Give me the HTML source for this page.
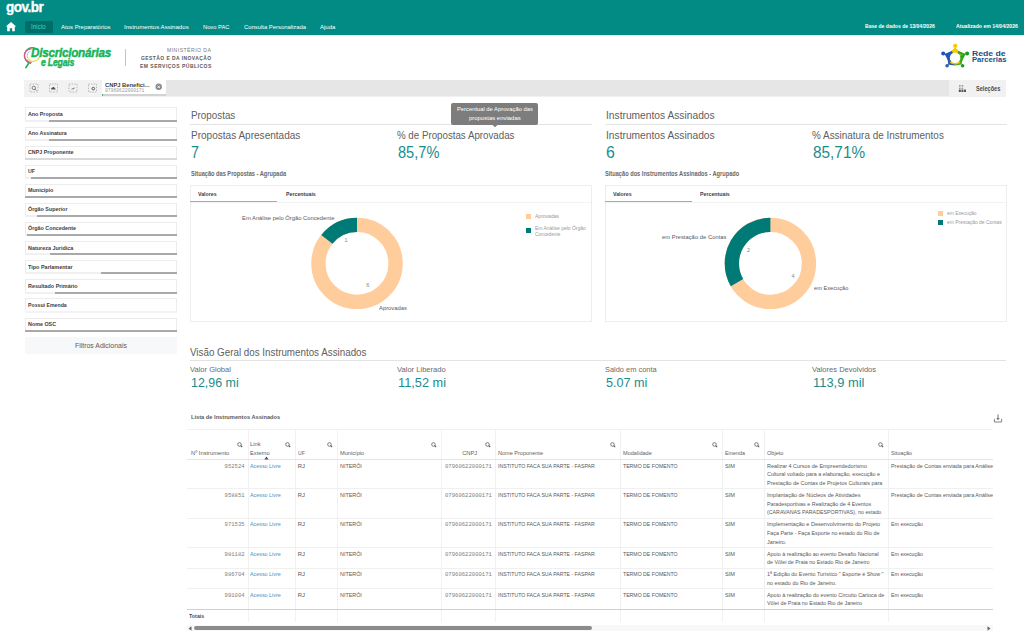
<!DOCTYPE html>
<html><head><meta charset="utf-8"><style>
html,body{margin:0;padding:0;width:1024px;height:644px;overflow:hidden;background:#fff;position:relative;font-family:'Liberation Sans', sans-serif;}
.t{position:absolute;white-space:nowrap;}
</style></head><body>
<div style="position:absolute;left:0px;top:0px;width:1024px;height:35px;background:#028b84;"></div>
<div style="position:absolute;left:0px;top:35px;width:1024px;height:1px;background:#e2f0ef;"></div>
<svg style="position:absolute;left:5px;top:21px" width="12" height="11" viewBox="0 0 12 11"><path d="M6 1 L11.2 5.6 L9.8 5.6 L9.8 10.2 L7.2 10.2 L7.2 7.2 L4.8 7.2 L4.8 10.2 L2.2 10.2 L2.2 5.6 L0.8 5.6 Z" fill="#fff"/></svg>
<div style="position:absolute;left:24.9px;top:20.7px;width:27.9px;height:12.099999999999998px;background:#006e66;border-radius:1.5px;"></div>
<svg style="position:absolute;left:20px;top:44px" width="24" height="26" viewBox="0 0 24 26"><path d="M15.00 4.18 A7.9 7.9 0 1 0 10.93 19.38" fill="none" stroke="#16b35a" stroke-width="1.3"/><path d="M11.72 4.93 A6.7 6.7 0 1 0 11.72 18.27" fill="none" stroke="#e2508f" stroke-width="1.2"/><path d="M10.10 6.89 A5.2 5.2 0 0 0 7.80 14.20" fill="none" stroke="#6cc9a8" stroke-width="0.8"/><path d="M7.56 14.76 A7.1 7.1 0 0 0 19.94 11.68" fill="none" stroke="#e6e04a" stroke-width="1.3"/><path d="M8.6 19.4 L5.9 23.6" stroke="#16b35a" stroke-width="1.7" stroke-linecap="round"/></svg>
<div style="position:absolute;left:124.5px;top:48.8px;width:1.0px;height:17.60000000000001px;background:#c4c4c4;"></div>
<svg style="position:absolute;left:938px;top:42px" width="34" height="28" viewBox="0 0 34 28"><path d="M17.19 5.40 L22.43 10.38 L17.10 15.80 L11.87 10.29 Z" fill="#f5c800"/><path d="M27.69 12.01 L24.03 18.93 L17.10 15.80 L20.47 8.99 Z" fill="#22a51c"/><path d="M23.57 22.61 L17.04 23.40 L17.10 15.80 L24.69 16.13 Z" fill="#3aa81e"/><path d="M10.17 22.65 L9.50 15.88 L17.10 15.80 L16.92 23.40 Z" fill="#2d5fae"/><path d="M6.61 11.92 L13.80 8.95 L17.10 15.80 L10.14 18.86 Z" fill="#1f55b8"/><path d="M11.60 20.80 Q17.10 24.30 22.60 20.80 L17.10 15.80 Z" fill="#e8c410"/><path d="M21.30 11.20 L19.10 15.80 L25.10 12.80 Z" fill="#7ab820"/><circle cx="17.1" cy="15.8" r="5.3" fill="#fff"/><circle cx="17.2" cy="3.9" r="2.1" fill="#f5c800"/><circle cx="29.1" cy="11.5" r="2.0" fill="#169c1c"/><circle cx="24.6" cy="23.7" r="1.8" fill="#14a01e"/><circle cx="9.1" cy="23.7" r="1.8" fill="#2a62b0"/><circle cx="5.2" cy="11.4" r="2.0" fill="#1a4fc6"/></svg>
<div style="position:absolute;left:24.3px;top:95.6px;width:981.9000000000001px;height:0.8000000000000114px;background:#f1f1f1;"></div>
<div style="position:absolute;left:24.3px;top:79.9px;width:77.3px;height:15.799999999999997px;background:#f2f2f2;"></div>
<div style="position:absolute;left:165.9px;top:79.9px;width:782.9px;height:15.799999999999997px;background:#e6e6e6;"></div>
<div style="position:absolute;left:948.8px;top:79.9px;width:57.40000000000009px;height:15.799999999999997px;background:#f1f1f1;"></div>
<div style="position:absolute;left:101.6px;top:79.5px;width:64.30000000000001px;height:14.299999999999997px;background:#fff;"></div>
<div style="position:absolute;left:101.6px;top:93.8px;width:64.30000000000001px;height:1.9000000000000057px;background:#d2d2d2;"></div>
<div style="position:absolute;left:101.6px;top:93.8px;width:1.4000000000000057px;height:1.9000000000000057px;background:#52b36a;"></div>
<svg style="position:absolute;left:28px;top:82px" width="72" height="12" viewBox="0 0 72 12"><rect x="2" y="2" width="8" height="8" fill="none" stroke="#a8a8a8" stroke-width="0.8" stroke-dasharray="1.4 1.3"/><rect x="21.5" y="2" width="8" height="8" fill="none" stroke="#a8a8a8" stroke-width="0.8" stroke-dasharray="1.4 1.3"/><rect x="41" y="2" width="8" height="8" fill="none" stroke="#a8a8a8" stroke-width="0.8" stroke-dasharray="1.4 1.3"/><rect x="60.5" y="2" width="8" height="8" fill="none" stroke="#a8a8a8" stroke-width="0.8" stroke-dasharray="1.4 1.3"/><circle cx="5.8" cy="5.9" r="1.7" fill="none" stroke="#666" stroke-width="0.8"/><path d="M7 7.1 L8.4 8.5" stroke="#666" stroke-width="0.9"/><path d="M23.2 6.2 L25.6 4.8 L27.4 6.6 L27.4 7.4 L23.2 7.4 Z" fill="#555"/><path d="M42.6 7.6 L45 6 L47.2 5.6 L45.8 7.2 Z" fill="#888"/><circle cx="65.3" cy="6.6" r="1.3" fill="none" stroke="#555" stroke-width="1"/></svg>
<svg style="position:absolute;left:155px;top:83px" width="8" height="8" viewBox="0 0 8 8"><circle cx="3.7" cy="3.8" r="3.2" fill="#8a8a8a"/><path d="M2.5 2.6 L4.9 5 M4.9 2.6 L2.5 5" stroke="#fff" stroke-width="0.9"/></svg>
<svg style="position:absolute;left:958px;top:84px" width="9" height="9" viewBox="0 0 9 9"><rect x="1" y="1" width="1.6" height="1.6" fill="#999"/><rect x="3.6" y="1" width="1.6" height="1.6" fill="#999"/><rect x="1" y="3.6" width="1.6" height="1.6" fill="#999"/><rect x="3.6" y="3.6" width="1.6" height="1.6" fill="#999"/><rect x="0.8" y="5.6" width="2" height="2.4" fill="#555"/><rect x="3.4" y="5.6" width="2" height="2.4" fill="#555"/><rect x="6" y="5.6" width="2" height="2.4" fill="#555"/></svg>
<div style="position:absolute;left:24.5px;top:107.40px;width:150.2px;height:12.2px;border:1px solid #ececec;border-bottom:none;background:#fff;"></div>
<div style="position:absolute;left:24.5px;top:119.60000000000001px;width:24.5px;height:2.0px;background:#f0f0f0;"></div>
<div style="position:absolute;left:49px;top:119.60000000000001px;width:127.69999999999999px;height:2.0px;background:#a9a9a9;"></div>
<div style="position:absolute;left:24.5px;top:126.50px;width:150.2px;height:12.2px;border:1px solid #ececec;border-bottom:none;background:#fff;"></div>
<div style="position:absolute;left:24.5px;top:138.7px;width:24.5px;height:2.0px;background:#f0f0f0;"></div>
<div style="position:absolute;left:49px;top:138.7px;width:127.69999999999999px;height:2.0px;background:#a9a9a9;"></div>
<div style="position:absolute;left:24.5px;top:145.60px;width:150.2px;height:12.2px;border:1px solid #ececec;border-bottom:none;background:#fff;"></div>
<div style="position:absolute;left:24.5px;top:157.8px;width:152.2px;height:2.0px;background:#d9d9d9;"></div>
<div style="position:absolute;left:24.5px;top:164.70px;width:150.2px;height:12.2px;border:1px solid #ececec;border-bottom:none;background:#fff;"></div>
<div style="position:absolute;left:24.5px;top:176.9px;width:6.100000000000001px;height:2.0px;background:#f0f0f0;"></div>
<div style="position:absolute;left:30.6px;top:176.9px;width:146.1px;height:2.0px;background:#a9a9a9;"></div>
<div style="position:absolute;left:24.5px;top:183.80px;width:150.2px;height:12.2px;border:1px solid #ececec;border-bottom:none;background:#fff;"></div>
<div style="position:absolute;left:24.5px;top:196.0px;width:0.10000000000000142px;height:2.0px;background:#f0f0f0;"></div>
<div style="position:absolute;left:24.6px;top:196.0px;width:152.1px;height:2.0px;background:#a9a9a9;"></div>
<div style="position:absolute;left:24.5px;top:202.90px;width:150.2px;height:12.2px;border:1px solid #ececec;border-bottom:none;background:#fff;"></div>
<div style="position:absolute;left:24.5px;top:215.1px;width:12.399999999999999px;height:2.0px;background:#f0f0f0;"></div>
<div style="position:absolute;left:36.9px;top:215.1px;width:139.79999999999998px;height:2.0px;background:#a9a9a9;"></div>
<div style="position:absolute;left:24.5px;top:222.00px;width:150.2px;height:12.2px;border:1px solid #ececec;border-bottom:none;background:#fff;"></div>
<div style="position:absolute;left:24.5px;top:234.2px;width:2.5px;height:2.0px;background:#f0f0f0;"></div>
<div style="position:absolute;left:27px;top:234.2px;width:149.7px;height:2.0px;background:#a9a9a9;"></div>
<div style="position:absolute;left:24.5px;top:241.10px;width:150.2px;height:12.2px;border:1px solid #ececec;border-bottom:none;background:#fff;"></div>
<div style="position:absolute;left:24.5px;top:253.3px;width:25.700000000000003px;height:2.0px;background:#f0f0f0;"></div>
<div style="position:absolute;left:50.2px;top:253.3px;width:126.49999999999999px;height:2.0px;background:#a9a9a9;"></div>
<div style="position:absolute;left:24.5px;top:260.20px;width:150.2px;height:12.2px;border:1px solid #ececec;border-bottom:none;background:#fff;"></div>
<div style="position:absolute;left:24.5px;top:272.40000000000003px;width:76.5px;height:2.0px;background:#f0f0f0;"></div>
<div style="position:absolute;left:101px;top:272.40000000000003px;width:75.69999999999999px;height:2.0px;background:#a9a9a9;"></div>
<div style="position:absolute;left:24.5px;top:279.30px;width:150.2px;height:12.2px;border:1px solid #ececec;border-bottom:none;background:#fff;"></div>
<div style="position:absolute;left:24.5px;top:291.5px;width:30.700000000000003px;height:2.0px;background:#f0f0f0;"></div>
<div style="position:absolute;left:55.2px;top:291.5px;width:121.49999999999999px;height:2.0px;background:#a9a9a9;"></div>
<div style="position:absolute;left:24.5px;top:298.40px;width:150.2px;height:12.2px;border:1px solid #ececec;border-bottom:none;background:#fff;"></div>
<div style="position:absolute;left:24.5px;top:310.59999999999997px;width:152.2px;height:2.0px;background:#f3f3f3;"></div>
<div style="position:absolute;left:24.5px;top:317.50px;width:150.2px;height:12.2px;border:1px solid #ececec;border-bottom:none;background:#fff;"></div>
<div style="position:absolute;left:24.5px;top:329.7px;width:0.10000000000000142px;height:2.0px;background:#f0f0f0;"></div>
<div style="position:absolute;left:24.6px;top:329.7px;width:152.1px;height:2.0px;background:#a9a9a9;"></div>
<div style="position:absolute;left:24.5px;top:336.9px;width:152.2px;height:16.850000000000023px;background:#f7f8fa;"></div>
<div style="position:absolute;left:190px;top:124px;width:402px;height:1px;background:#e3e3e3;"></div>
<div style="position:absolute;left:190.2px;top:185.3px;width:399.6px;height:134.8px;border:1px solid #ededed;"></div>
<div style="position:absolute;left:191.2px;top:201.5px;width:400.09999999999997px;height:1.5px;background:#f3f3f3;"></div>
<div style="position:absolute;left:190.2px;top:201px;width:87.0px;height:1.3000000000000114px;background:#78c894;"></div>
<div style="position:absolute;left:604.8px;top:124px;width:402.0px;height:1px;background:#e3e3e3;"></div>
<div style="position:absolute;left:605.0px;top:185.3px;width:399.6px;height:134.8px;border:1px solid #ededed;"></div>
<div style="position:absolute;left:606.0px;top:201.5px;width:400.0999999999999px;height:1.5px;background:#f3f3f3;"></div>
<div style="position:absolute;left:605.0px;top:201px;width:87.20000000000005px;height:1.3000000000000114px;background:#78c894;"></div>
<svg style="position:absolute;left:0;top:0" width="1024" height="644"><circle cx="357" cy="263.4" r="38.55" fill="none" stroke="#ffcd9b" stroke-width="14.300000000000004"/><path d="M357,217.7 A45.7,45.7 0 0 0 321.27,234.91 L332.45,243.82 A31.4,31.4 0 0 1 357,231.99999999999997 Z" fill="#007a76"/></svg>
<svg style="position:absolute;left:0;top:0" width="1024" height="644"><circle cx="770.4" cy="263.4" r="38.55" fill="none" stroke="#ffcd9b" stroke-width="14.300000000000004"/><path d="M770.4,217.7 A45.7,45.7 0 0 0 730.82,286.25 L743.21,279.10 A31.4,31.4 0 0 1 770.4,231.99999999999997 Z" fill="#007a76"/></svg>
<div style="position:absolute;left:525.8px;top:213.9px;width:5.100000000000023px;height:5.0px;background:#ffcd9b;"></div>
<div style="position:absolute;left:525.8px;top:228px;width:5.100000000000023px;height:5px;background:#007a76;"></div>
<div style="position:absolute;left:937.5px;top:210.8px;width:5.5px;height:5.0px;background:#ffcd9b;"></div>
<div style="position:absolute;left:937.5px;top:219.8px;width:5.5px;height:5.099999999999994px;background:#007a76;"></div>
<div style="position:absolute;left:451.3px;top:103.2px;width:86.69999999999999px;height:21.39999999999999px;background:#7d7d7d;border-radius:2px;"></div>
<svg style="position:absolute;left:490px;top:124px" width="10" height="4" viewBox="0 0 10 4"><path d="M1.5 0 L5 3.2 L8.5 0 Z" fill="#7d7d7d"/></svg>
<div style="position:absolute;left:190px;top:360px;width:816px;height:1px;background:#e3e3e3;"></div>
<svg style="position:absolute;left:993px;top:413px" width="10" height="10" viewBox="0 0 10 10"><path d="M5 1.5 L5 6.5" stroke="#666" stroke-width="0.9"/><path d="M3.3 5 L5 6.9 L6.7 5 Z" fill="#666"/><path d="M1.4 5.9 L1.4 9 L8.6 9 L8.6 5.9" fill="none" stroke="#777" stroke-width="0.9"/></svg>
<div style="position:absolute;left:186.6px;top:428.5px;width:806.1px;height:1.0px;background:#f1f1f1;"></div>
<div style="position:absolute;left:247.8px;top:429px;width:1.0px;height:193.20000000000005px;background:#f1f1f1;"></div>
<div style="position:absolute;left:295.1px;top:429px;width:1.0px;height:193.20000000000005px;background:#f1f1f1;"></div>
<div style="position:absolute;left:336.8px;top:429px;width:1.0px;height:193.20000000000005px;background:#f1f1f1;"></div>
<div style="position:absolute;left:441.2px;top:429px;width:1.0px;height:193.20000000000005px;background:#f1f1f1;"></div>
<div style="position:absolute;left:495.4px;top:429px;width:1.0px;height:193.20000000000005px;background:#f1f1f1;"></div>
<div style="position:absolute;left:620.0px;top:429px;width:1.0px;height:193.20000000000005px;background:#f1f1f1;"></div>
<div style="position:absolute;left:722.0px;top:429px;width:1.0px;height:193.20000000000005px;background:#f1f1f1;"></div>
<div style="position:absolute;left:764.0px;top:429px;width:1.0px;height:193.20000000000005px;background:#f1f1f1;"></div>
<div style="position:absolute;left:887.9px;top:429px;width:1.0px;height:193.20000000000005px;background:#f1f1f1;"></div>
<div style="position:absolute;left:186.6px;top:459px;width:806.1px;height:1px;background:#e4e4e4;"></div>
<div style="position:absolute;left:186.6px;top:488.2px;width:806.1px;height:1.0px;background:#f0f0f0;"></div>
<div style="position:absolute;left:186.6px;top:517.6px;width:806.1px;height:1.0px;background:#f0f0f0;"></div>
<div style="position:absolute;left:186.6px;top:546.9px;width:806.1px;height:1.0px;background:#f0f0f0;"></div>
<div style="position:absolute;left:186.6px;top:567.5px;width:806.1px;height:1.0px;background:#f0f0f0;"></div>
<div style="position:absolute;left:186.6px;top:588.0px;width:806.1px;height:1.0px;background:#f0f0f0;"></div>
<div style="position:absolute;left:186.6px;top:608.8px;width:806.1px;height:1.2000000000000455px;background:#cfcfcf;"></div>
<svg style="position:absolute;left:264px;top:455.5px" width="5" height="4" viewBox="0 0 5 4"><path d="M0.3 3.5 L2.5 0.5 L4.7 3.5 Z" fill="#555"/></svg>
<svg style="position:absolute;left:237.1px;top:442px" width="6" height="6" viewBox="0 0 6 6"><circle cx="2.45" cy="2.45" r="1.8" fill="none" stroke="#666" stroke-width="0.85"/><path d="M3.7 3.7 L5.2 5.2" stroke="#555" stroke-width="1.1"/></svg>
<svg style="position:absolute;left:284.7px;top:442px" width="6" height="6" viewBox="0 0 6 6"><circle cx="2.45" cy="2.45" r="1.8" fill="none" stroke="#666" stroke-width="0.85"/><path d="M3.7 3.7 L5.2 5.2" stroke="#555" stroke-width="1.1"/></svg>
<svg style="position:absolute;left:326.5px;top:442px" width="6" height="6" viewBox="0 0 6 6"><circle cx="2.45" cy="2.45" r="1.8" fill="none" stroke="#666" stroke-width="0.85"/><path d="M3.7 3.7 L5.2 5.2" stroke="#555" stroke-width="1.1"/></svg>
<svg style="position:absolute;left:431.1px;top:442px" width="6" height="6" viewBox="0 0 6 6"><circle cx="2.45" cy="2.45" r="1.8" fill="none" stroke="#666" stroke-width="0.85"/><path d="M3.7 3.7 L5.2 5.2" stroke="#555" stroke-width="1.1"/></svg>
<svg style="position:absolute;left:485.0px;top:442px" width="6" height="6" viewBox="0 0 6 6"><circle cx="2.45" cy="2.45" r="1.8" fill="none" stroke="#666" stroke-width="0.85"/><path d="M3.7 3.7 L5.2 5.2" stroke="#555" stroke-width="1.1"/></svg>
<svg style="position:absolute;left:609.6px;top:442px" width="6" height="6" viewBox="0 0 6 6"><circle cx="2.45" cy="2.45" r="1.8" fill="none" stroke="#666" stroke-width="0.85"/><path d="M3.7 3.7 L5.2 5.2" stroke="#555" stroke-width="1.1"/></svg>
<svg style="position:absolute;left:711.9px;top:442px" width="6" height="6" viewBox="0 0 6 6"><circle cx="2.45" cy="2.45" r="1.8" fill="none" stroke="#666" stroke-width="0.85"/><path d="M3.7 3.7 L5.2 5.2" stroke="#555" stroke-width="1.1"/></svg>
<svg style="position:absolute;left:753.6px;top:442px" width="6" height="6" viewBox="0 0 6 6"><circle cx="2.45" cy="2.45" r="1.8" fill="none" stroke="#666" stroke-width="0.85"/><path d="M3.7 3.7 L5.2 5.2" stroke="#555" stroke-width="1.1"/></svg>
<svg style="position:absolute;left:878.1px;top:442px" width="6" height="6" viewBox="0 0 6 6"><circle cx="2.45" cy="2.45" r="1.8" fill="none" stroke="#666" stroke-width="0.85"/><path d="M3.7 3.7 L5.2 5.2" stroke="#555" stroke-width="1.1"/></svg>
<div style="position:absolute;left:187px;top:625px;width:805.7px;height:6.2999999999999545px;background:#f8f8f8;"></div>
<svg style="position:absolute;left:188px;top:625.5px" width="4" height="5" viewBox="0 0 4 5"><path d="M3.5 0.3 L0.5 2.5 L3.5 4.7 Z" fill="#666"/></svg>
<svg style="position:absolute;left:987.4px;top:625.5px" width="4" height="5" viewBox="0 0 4 5"><path d="M0.5 0.3 L3.5 2.5 L0.5 4.7 Z" fill="#666"/></svg>
<div style="position:absolute;left:194.3px;top:626px;width:397.3px;height:3.7999999999999545px;background:#8c8c8c;border-radius:2px;"></div>
<div class="t" style="left:6.40px;top:0.00px;font:normal 700 14px/14px 'Liberation Sans', sans-serif;color:#fff;-webkit-text-stroke:0.35px #fff;letter-spacing:-0.5px;transform:scaleX(0.9654);transform-origin:left;">gov.br</div>
<div class="t" style="left:31.30px;top:24.00px;font:normal 400 6.4px/6.4px 'Liberation Sans', sans-serif;color:#34dcc6;transform:scaleX(0.9610);transform-origin:left;">Início</div>
<div class="t" style="left:60.50px;top:24.00px;font:normal 400 6.1px/6.1px 'Liberation Sans', sans-serif;color:#fff;transform:scaleX(0.9818);transform-origin:left;">Atos Preparatórios</div>
<div class="t" style="left:124.00px;top:24.00px;font:normal 400 6.1px/6.1px 'Liberation Sans', sans-serif;color:#fff;">Instrumentos Assinados</div>
<div class="t" style="left:203.00px;top:24.00px;font:normal 400 6.1px/6.1px 'Liberation Sans', sans-serif;color:#fff;transform:scaleX(0.9456);transform-origin:left;">Novo PAC</div>
<div class="t" style="left:243.60px;top:24.00px;font:normal 400 6.1px/6.1px 'Liberation Sans', sans-serif;color:#fff;transform:scaleX(0.9639);transform-origin:left;">Consulta Personalizada</div>
<div class="t" style="left:319.70px;top:24.00px;font:normal 400 6.1px/6.1px 'Liberation Sans', sans-serif;color:#fff;transform:scaleX(0.9807);transform-origin:left;">Ajuda</div>
<div class="t" style="left:865.10px;top:24.00px;font:normal 700 5.6px/5.6px 'Liberation Sans', sans-serif;color:#fff;transform:scaleX(0.9054);transform-origin:left;">Base de dados de 13/04/2026</div>
<div class="t" style="left:956.20px;top:24.00px;font:normal 700 5.6px/5.6px 'Liberation Sans', sans-serif;color:#fff;transform:scaleX(0.9179);transform-origin:left;">Atualizado em 14/04/2026</div>
<div class="t" style="left:31.10px;top:46.00px;font:italic 700 13px/13px 'Liberation Sans', sans-serif;color:#16b35a;-webkit-text-stroke:0.45px #16b35a;letter-spacing:-0.3px;transform:scaleX(0.9018);transform-origin:left;">Discricionárias</div>
<div class="t" style="left:40.80px;top:57.00px;font:italic 700 11.5px/11.5px 'Liberation Sans', sans-serif;color:#16b35a;-webkit-text-stroke:0.45px #16b35a;letter-spacing:-0.3px;transform:scaleX(0.7611);transform-origin:left;">e Legais</div>
<div class="t" style="left:167.40px;top:48.00px;font:normal 400 5.6px/5.6px 'Liberation Sans', sans-serif;color:#7a7a7a;letter-spacing:0.5px;transform:scaleX(0.9154);transform-origin:left;">MINISTÉRIO DA</div>
<div class="t" style="left:141.00px;top:56.00px;font:normal 700 5.6px/5.6px 'Liberation Sans', sans-serif;color:#5a5a5a;letter-spacing:0.5px;transform:scaleX(0.8861);transform-origin:left;">GESTÃO E DA INOVAÇÃO</div>
<div class="t" style="left:140.00px;top:64.00px;font:normal 700 5.6px/5.6px 'Liberation Sans', sans-serif;color:#5a5a5a;letter-spacing:0.5px;transform:scaleX(0.9056);transform-origin:left;">EM SERVIÇOS PÚBLICOS</div>
<div class="t" style="left:972.00px;top:50.00px;font:normal 700 7.3px/7.3px 'Liberation Sans', sans-serif;color:#234f86;transform:scaleX(1.1832);transform-origin:left;">Rede de</div>
<div class="t" style="left:972.00px;top:56.00px;font:normal 700 7.3px/7.3px 'Liberation Sans', sans-serif;color:#234f86;transform:scaleX(1.0463);transform-origin:left;">Parcerias</div>
<div class="t" style="left:105.20px;top:82.00px;font:normal 700 6px/6px 'Liberation Sans', sans-serif;color:#404040;transform:scaleX(0.9671);transform-origin:left;">CNPJ Benefici...</div>
<div class="t" style="left:105.20px;top:89.00px;font:normal 400 5.3px/5.3px 'Liberation Mono', monospace;color:#9a9a9a;transform:scaleX(0.8849);transform-origin:left;">07960622000171</div>
<div class="t" style="left:975.50px;top:86.00px;font:normal 700 6.6px/6.6px 'Liberation Sans', sans-serif;color:#4a4a4a;transform:scaleX(0.8490);transform-origin:left;">Seleções</div>
<div class="t" style="left:28.20px;top:111.00px;font:normal 700 6px/6px 'Liberation Sans', sans-serif;color:#404040;transform:scaleX(0.8847);transform-origin:left;">Ano Proposta</div>
<div class="t" style="left:28.20px;top:130.00px;font:normal 700 6px/6px 'Liberation Sans', sans-serif;color:#404040;transform:scaleX(0.8796);transform-origin:left;">Ano Assinatura</div>
<div class="t" style="left:28.20px;top:149.00px;font:normal 700 6px/6px 'Liberation Sans', sans-serif;color:#404040;transform:scaleX(0.8901);transform-origin:left;">CNPJ Proponente</div>
<div class="t" style="left:28.20px;top:168.00px;font:normal 700 6px/6px 'Liberation Sans', sans-serif;color:#404040;transform:scaleX(0.8752);transform-origin:left;">UF</div>
<div class="t" style="left:28.20px;top:187.00px;font:normal 700 6px/6px 'Liberation Sans', sans-serif;color:#404040;transform:scaleX(0.9073);transform-origin:left;">Município</div>
<div class="t" style="left:28.20px;top:206.00px;font:normal 700 6px/6px 'Liberation Sans', sans-serif;color:#404040;transform:scaleX(0.8976);transform-origin:left;">Órgão Superior</div>
<div class="t" style="left:28.20px;top:225.00px;font:normal 700 6px/6px 'Liberation Sans', sans-serif;color:#404040;transform:scaleX(0.8952);transform-origin:left;">Órgão Concedente</div>
<div class="t" style="left:28.20px;top:245.00px;font:normal 700 6px/6px 'Liberation Sans', sans-serif;color:#404040;transform:scaleX(0.9077);transform-origin:left;">Natureza Jurídica</div>
<div class="t" style="left:28.20px;top:264.00px;font:normal 700 6px/6px 'Liberation Sans', sans-serif;color:#404040;transform:scaleX(0.9120);transform-origin:left;">Tipo Parlamentar</div>
<div class="t" style="left:28.20px;top:283.00px;font:normal 700 6px/6px 'Liberation Sans', sans-serif;color:#404040;transform:scaleX(0.9016);transform-origin:left;">Resultado Primário</div>
<div class="t" style="left:28.20px;top:302.00px;font:normal 700 6px/6px 'Liberation Sans', sans-serif;color:#404040;transform:scaleX(0.8661);transform-origin:left;">Possui Emenda</div>
<div class="t" style="left:28.20px;top:321.00px;font:normal 700 6px/6px 'Liberation Sans', sans-serif;color:#404040;transform:scaleX(0.8951);transform-origin:left;">Nome OSC</div>
<div class="t" style="left:74.70px;top:342.00px;font:normal 400 7.8px/7.8px 'Liberation Sans', sans-serif;color:#595959;transform:scaleX(0.8871);transform-origin:left;">Filtros Adicionais</div>
<div class="t" style="left:190.80px;top:111.00px;font:normal 400 10.4px/10.4px 'Liberation Sans', sans-serif;color:#606060;transform:scaleX(0.9461);transform-origin:left;">Propostas</div>
<div class="t" style="left:190.80px;top:131.00px;font:normal 400 10.4px/10.4px 'Liberation Sans', sans-serif;color:#606060;transform:scaleX(0.9658);transform-origin:left;">Propostas Apresentadas</div>
<div class="t" style="left:191.00px;top:144.00px;font:normal 400 16.5px/16.5px 'Liberation Sans', sans-serif;color:#1a8c8c;transform:scaleX(0.8718);transform-origin:left;">7</div>
<div class="t" style="left:397.40px;top:131.00px;font:normal 400 10.4px/10.4px 'Liberation Sans', sans-serif;color:#606060;transform:scaleX(0.9371);transform-origin:left;">% de Propostas Aprovadas</div>
<div class="t" style="left:398.20px;top:144.00px;font:normal 400 16.5px/16.5px 'Liberation Sans', sans-serif;color:#1a8c8c;transform:scaleX(0.8849);transform-origin:left;">85,7%</div>
<div class="t" style="left:190.50px;top:171.00px;font:normal 700 6.5px/6.5px 'Liberation Sans', sans-serif;color:#6a6a6a;transform:scaleX(0.8679);transform-origin:left;">Situação das Propostas - Agrupada</div>
<div class="t" style="left:198.30px;top:192.00px;font:normal 700 5.8px/5.8px 'Liberation Sans', sans-serif;color:#404040;transform:scaleX(0.9013);transform-origin:left;">Valores</div>
<div class="t" style="left:285.80px;top:192.00px;font:normal 700 5.8px/5.8px 'Liberation Sans', sans-serif;color:#404040;transform:scaleX(0.9063);transform-origin:left;">Percentuais</div>
<div class="t" style="left:605.60px;top:111.00px;font:normal 400 10.4px/10.4px 'Liberation Sans', sans-serif;color:#606060;transform:scaleX(0.9848);transform-origin:left;">Instrumentos Assinados</div>
<div class="t" style="left:605.60px;top:131.00px;font:normal 400 10.4px/10.4px 'Liberation Sans', sans-serif;color:#606060;transform:scaleX(0.9848);transform-origin:left;">Instrumentos Assinados</div>
<div class="t" style="left:605.80px;top:144.00px;font:normal 400 16.5px/16.5px 'Liberation Sans', sans-serif;color:#1a8c8c;transform:scaleX(0.9590);transform-origin:left;">6</div>
<div class="t" style="left:812.20px;top:131.00px;font:normal 400 10.4px/10.4px 'Liberation Sans', sans-serif;color:#606060;transform:scaleX(0.9551);transform-origin:left;">% Assinatura de Instrumentos</div>
<div class="t" style="left:813.00px;top:144.00px;font:normal 400 16.5px/16.5px 'Liberation Sans', sans-serif;color:#1a8c8c;transform:scaleX(0.9310);transform-origin:left;">85,71%</div>
<div class="t" style="left:605.30px;top:171.00px;font:normal 700 6.5px/6.5px 'Liberation Sans', sans-serif;color:#6a6a6a;transform:scaleX(0.8714);transform-origin:left;">Situação dos Instrumentos Assinados - Agrupado</div>
<div class="t" style="left:613.30px;top:192.00px;font:normal 700 5.8px/5.8px 'Liberation Sans', sans-serif;color:#404040;transform:scaleX(0.9013);transform-origin:left;">Valores</div>
<div class="t" style="left:700.00px;top:192.00px;font:normal 700 5.8px/5.8px 'Liberation Sans', sans-serif;color:#404040;transform:scaleX(0.9063);transform-origin:left;">Percentuais</div>
<div class="t" style="left:242.10px;top:215.00px;font:normal 400 6.2px/6.2px 'Liberation Sans', sans-serif;color:#5a5a5a;transform:scaleX(0.9392);transform-origin:left;">Em Análise pelo Órgão Concedente</div>
<div class="t" style="left:379.00px;top:305.00px;font:normal 400 6.2px/6.2px 'Liberation Sans', sans-serif;color:#5a5a5a;transform:scaleX(0.9446);transform-origin:left;">Aprovadas</div>
<div class="t" style="left:344.60px;top:238.00px;font:normal 400 5.6px/5.6px 'Liberation Sans', sans-serif;color:#888;">1</div>
<div class="t" style="left:366.20px;top:283.00px;font:normal 400 5.6px/5.6px 'Liberation Sans', sans-serif;color:#888;">6</div>
<div class="t" style="left:662.20px;top:234.00px;font:normal 400 6.2px/6.2px 'Liberation Sans', sans-serif;color:#5a5a5a;transform:scaleX(0.9467);transform-origin:left;">em Prestação de Contas</div>
<div class="t" style="left:814.00px;top:285.00px;font:normal 400 6.2px/6.2px 'Liberation Sans', sans-serif;color:#5a5a5a;transform:scaleX(0.9185);transform-origin:left;">em Execução</div>
<div class="t" style="left:747.00px;top:248.00px;font:normal 400 5.6px/5.6px 'Liberation Sans', sans-serif;color:#888;">2</div>
<div class="t" style="left:791.40px;top:274.00px;font:normal 400 5.6px/5.6px 'Liberation Sans', sans-serif;color:#888;">4</div>
<div class="t" style="left:534.60px;top:214.00px;font:normal 400 5.4px/5.4px 'Liberation Sans', sans-serif;color:#9a9a9a;transform:scaleX(0.9297);transform-origin:left;">Aprovadas</div>
<div class="t" style="left:534.60px;top:226.00px;font:normal 400 5.4px/5.4px 'Liberation Sans', sans-serif;color:#9a9a9a;transform:scaleX(0.9184);transform-origin:left;">Em Análise pelo Órgão</div>
<div class="t" style="left:534.60px;top:232.00px;font:normal 400 5.4px/5.4px 'Liberation Sans', sans-serif;color:#9a9a9a;transform:scaleX(0.8722);transform-origin:left;">Concedente</div>
<div class="t" style="left:946.60px;top:211.00px;font:normal 400 5.4px/5.4px 'Liberation Sans', sans-serif;color:#9a9a9a;transform:scaleX(0.9047);transform-origin:left;">em Execução</div>
<div class="t" style="left:946.60px;top:220.00px;font:normal 400 5.4px/5.4px 'Liberation Sans', sans-serif;color:#9a9a9a;transform:scaleX(0.9221);transform-origin:left;">em Prestação de Contas</div>
<div class="t" style="left:456.60px;top:106.00px;font:normal 400 6.2px/6.2px 'Liberation Sans', sans-serif;color:#fff;transform:scaleX(0.9380);transform-origin:left;">Percentual de Aprovação das</div>
<div class="t" style="left:468.80px;top:115.00px;font:normal 400 6.2px/6.2px 'Liberation Sans', sans-serif;color:#fff;transform:scaleX(0.9634);transform-origin:left;">propostas enviadas</div>
<div class="t" style="left:190.30px;top:347.00px;font:normal 400 10.6px/10.6px 'Liberation Sans', sans-serif;color:#606060;transform:scaleX(0.9258);transform-origin:left;">Visão Geral dos Instrumentos Assinados</div>
<div class="t" style="left:190.30px;top:366.00px;font:normal 400 7.2px/7.2px 'Liberation Sans', sans-serif;color:#6a6a6a;transform:scaleX(1.0489);transform-origin:left;">Valor Global</div>
<div class="t" style="left:191.30px;top:377.00px;font:normal 400 12.6px/12.6px 'Liberation Sans', sans-serif;color:#1a8c8c;transform:scaleX(0.9870);transform-origin:left;">12,96 mi</div>
<div class="t" style="left:397.40px;top:366.00px;font:normal 400 7.2px/7.2px 'Liberation Sans', sans-serif;color:#6a6a6a;transform:scaleX(1.0541);transform-origin:left;">Valor Liberado</div>
<div class="t" style="left:398.40px;top:377.00px;font:normal 400 12.6px/12.6px 'Liberation Sans', sans-serif;color:#1a8c8c;transform:scaleX(1.0128);transform-origin:left;">11,52 mi</div>
<div class="t" style="left:605.00px;top:366.00px;font:normal 400 7.2px/7.2px 'Liberation Sans', sans-serif;color:#6a6a6a;transform:scaleX(1.0334);transform-origin:left;">Saldo em conta</div>
<div class="t" style="left:606.00px;top:377.00px;font:normal 400 12.6px/12.6px 'Liberation Sans', sans-serif;color:#1a8c8c;">5.07 mi</div>
<div class="t" style="left:812.40px;top:366.00px;font:normal 400 7.2px/7.2px 'Liberation Sans', sans-serif;color:#6a6a6a;transform:scaleX(1.0508);transform-origin:left;">Valores Devolvidos</div>
<div class="t" style="left:813.40px;top:377.00px;font:normal 400 12.6px/12.6px 'Liberation Sans', sans-serif;color:#1a8c8c;transform:scaleX(1.0241);transform-origin:left;">113,9 mil</div>
<div class="t" style="left:191.25px;top:415.00px;font:normal 700 5.5px/5.5px 'Liberation Sans', sans-serif;color:#5a5a5a;transform:scaleX(1.0331);transform-origin:left;">Lista de Instrumentos Assinados</div>
<div class="t" style="left:190.90px;top:451.00px;font:normal 400 5.8px/5.8px 'Liberation Sans', sans-serif;color:#5e5e5e;transform:scaleX(0.9911);transform-origin:left;">Nº Instrumento</div>
<div class="t" style="left:250.30px;top:442.00px;font:normal 400 5.8px/5.8px 'Liberation Sans', sans-serif;color:#5e5e5e;transform:scaleX(1.0056);transform-origin:left;">Link</div>
<div class="t" style="left:250.30px;top:451.00px;font:normal 400 5.8px/5.8px 'Liberation Sans', sans-serif;color:#5e5e5e;transform:scaleX(0.9856);transform-origin:left;">Externo</div>
<div class="t" style="left:297.80px;top:451.00px;font:normal 400 5.8px/5.8px 'Liberation Sans', sans-serif;color:#5e5e5e;transform:scaleX(0.8666);transform-origin:left;">UF</div>
<div class="t" style="left:339.70px;top:451.00px;font:normal 400 5.8px/5.8px 'Liberation Sans', sans-serif;color:#5e5e5e;transform:scaleX(0.9749);transform-origin:left;">Município</div>
<div class="t" style="left:462.13px;top:451.00px;font:normal 400 5.8px/5.8px 'Liberation Sans', sans-serif;color:#5e5e5e;">CNPJ</div>
<div class="t" style="left:498.10px;top:451.00px;font:normal 400 5.8px/5.8px 'Liberation Sans', sans-serif;color:#5e5e5e;transform:scaleX(0.9559);transform-origin:left;">Nome Proponente</div>
<div class="t" style="left:622.50px;top:451.00px;font:normal 400 5.8px/5.8px 'Liberation Sans', sans-serif;color:#5e5e5e;transform:scaleX(0.9604);transform-origin:left;">Modalidade</div>
<div class="t" style="left:724.80px;top:451.00px;font:normal 400 5.8px/5.8px 'Liberation Sans', sans-serif;color:#5e5e5e;transform:scaleX(0.9212);transform-origin:left;">Emenda</div>
<div class="t" style="left:766.90px;top:451.00px;font:normal 400 5.8px/5.8px 'Liberation Sans', sans-serif;color:#5e5e5e;transform:scaleX(0.9597);transform-origin:left;">Objeto</div>
<div class="t" style="left:891.00px;top:451.00px;font:normal 400 5.8px/5.8px 'Liberation Sans', sans-serif;color:#5e5e5e;transform:scaleX(0.9304);transform-origin:left;">Situação</div>
<div class="t" style="left:222.50px;top:464.00px;font:normal 400 6.0px/6.0px 'Liberation Mono', monospace;color:#808080;transform:scaleX(0.9258);transform-origin:right;">952524</div>
<div class="t" style="left:250.30px;top:463.00px;font:normal 400 6.2px/6.2px 'Liberation Sans', sans-serif;color:#3d93c4;transform:scaleX(0.8650);transform-origin:left;">Acesso Livre</div>
<div class="t" style="left:297.80px;top:464.00px;font:normal 400 5.9px/5.9px 'Liberation Sans', sans-serif;color:#585858;">RJ</div>
<div class="t" style="left:339.70px;top:464.00px;font:normal 400 5.9px/5.9px 'Liberation Sans', sans-serif;color:#585858;transform:scaleX(0.9152);transform-origin:left;">NITERÓI</div>
<div class="t" style="left:444.80px;top:464.00px;font:normal 400 6.0px/6.0px 'Liberation Mono', monospace;color:#808080;transform:scaleX(0.9304);transform-origin:left;">07960622000171</div>
<div class="t" style="left:498.10px;top:464.00px;font:normal 400 5.9px/5.9px 'Liberation Sans', sans-serif;color:#585858;transform:scaleX(0.8799);transform-origin:left;">INSTITUTO FACA SUA PARTE - FASPAR</div>
<div class="t" style="left:622.80px;top:464.00px;font:normal 400 5.9px/5.9px 'Liberation Sans', sans-serif;color:#585858;transform:scaleX(0.8783);transform-origin:left;">TERMO DE FOMENTO</div>
<div class="t" style="left:724.80px;top:464.00px;font:normal 400 5.9px/5.9px 'Liberation Sans', sans-serif;color:#585858;transform:scaleX(0.9534);transform-origin:left;">SIM</div>
<div class="t" style="left:766.70px;top:464.00px;font:normal 400 5.9px/5.9px 'Liberation Sans', sans-serif;color:#585858;transform:scaleX(0.9250);transform-origin:left;">Realizar 4 Cursos de Empreendedorismo</div>
<div class="t" style="left:766.70px;top:472.00px;font:normal 400 5.9px/5.9px 'Liberation Sans', sans-serif;color:#585858;transform:scaleX(0.9147);transform-origin:left;">Cultural voltado para a elaboração, execução e</div>
<div class="t" style="left:766.70px;top:481.00px;font:normal 400 5.9px/5.9px 'Liberation Sans', sans-serif;color:#585858;transform:scaleX(0.9244);transform-origin:left;">Prestação de Contas de Projetos Culturais para</div>
<div class="t" style="left:891.00px;top:464.00px;font:normal 400 5.9px/5.9px 'Liberation Sans', sans-serif;color:#585858;transform:scaleX(0.9165);transform-origin:left;">Prestação de Contas enviada para Análise</div>
<div class="t" style="left:222.50px;top:493.00px;font:normal 400 6.0px/6.0px 'Liberation Mono', monospace;color:#808080;transform:scaleX(0.9258);transform-origin:right;">958851</div>
<div class="t" style="left:250.30px;top:492.00px;font:normal 400 6.2px/6.2px 'Liberation Sans', sans-serif;color:#3d93c4;transform:scaleX(0.8650);transform-origin:left;">Acesso Livre</div>
<div class="t" style="left:297.80px;top:493.00px;font:normal 400 5.9px/5.9px 'Liberation Sans', sans-serif;color:#585858;">RJ</div>
<div class="t" style="left:339.70px;top:493.00px;font:normal 400 5.9px/5.9px 'Liberation Sans', sans-serif;color:#585858;transform:scaleX(0.9152);transform-origin:left;">NITERÓI</div>
<div class="t" style="left:444.80px;top:493.00px;font:normal 400 6.0px/6.0px 'Liberation Mono', monospace;color:#808080;transform:scaleX(0.9304);transform-origin:left;">07960622000171</div>
<div class="t" style="left:498.10px;top:493.00px;font:normal 400 5.9px/5.9px 'Liberation Sans', sans-serif;color:#585858;transform:scaleX(0.8799);transform-origin:left;">INSTITUTO FACA SUA PARTE - FASPAR</div>
<div class="t" style="left:622.80px;top:493.00px;font:normal 400 5.9px/5.9px 'Liberation Sans', sans-serif;color:#585858;transform:scaleX(0.8783);transform-origin:left;">TERMO DE FOMENTO</div>
<div class="t" style="left:724.80px;top:493.00px;font:normal 400 5.9px/5.9px 'Liberation Sans', sans-serif;color:#585858;transform:scaleX(0.9534);transform-origin:left;">SIM</div>
<div class="t" style="left:766.70px;top:493.00px;font:normal 400 5.9px/5.9px 'Liberation Sans', sans-serif;color:#585858;transform:scaleX(0.9356);transform-origin:left;">Implantação de Núcleos de Atividades</div>
<div class="t" style="left:766.70px;top:502.00px;font:normal 400 5.9px/5.9px 'Liberation Sans', sans-serif;color:#585858;transform:scaleX(0.9112);transform-origin:left;">Paradesportivas e Realização de 4 Eventos</div>
<div class="t" style="left:766.70px;top:510.00px;font:normal 400 5.9px/5.9px 'Liberation Sans', sans-serif;color:#585858;transform:scaleX(0.8992);transform-origin:left;">(CARAVANAS PARADESPORTIVAS), no estado</div>
<div class="t" style="left:891.00px;top:493.00px;font:normal 400 5.9px/5.9px 'Liberation Sans', sans-serif;color:#585858;transform:scaleX(0.9165);transform-origin:left;">Prestação de Contas enviada para Análise</div>
<div class="t" style="left:222.50px;top:522.00px;font:normal 400 6.0px/6.0px 'Liberation Mono', monospace;color:#808080;transform:scaleX(0.9258);transform-origin:right;">971535</div>
<div class="t" style="left:250.30px;top:521.00px;font:normal 400 6.2px/6.2px 'Liberation Sans', sans-serif;color:#3d93c4;transform:scaleX(0.8650);transform-origin:left;">Acesso Livre</div>
<div class="t" style="left:297.80px;top:522.00px;font:normal 400 5.9px/5.9px 'Liberation Sans', sans-serif;color:#585858;">RJ</div>
<div class="t" style="left:339.70px;top:522.00px;font:normal 400 5.9px/5.9px 'Liberation Sans', sans-serif;color:#585858;transform:scaleX(0.9152);transform-origin:left;">NITERÓI</div>
<div class="t" style="left:444.80px;top:522.00px;font:normal 400 6.0px/6.0px 'Liberation Mono', monospace;color:#808080;transform:scaleX(0.9304);transform-origin:left;">07960622000171</div>
<div class="t" style="left:498.10px;top:522.00px;font:normal 400 5.9px/5.9px 'Liberation Sans', sans-serif;color:#585858;transform:scaleX(0.8799);transform-origin:left;">INSTITUTO FACA SUA PARTE - FASPAR</div>
<div class="t" style="left:622.80px;top:522.00px;font:normal 400 5.9px/5.9px 'Liberation Sans', sans-serif;color:#585858;transform:scaleX(0.8783);transform-origin:left;">TERMO DE FOMENTO</div>
<div class="t" style="left:724.80px;top:522.00px;font:normal 400 5.9px/5.9px 'Liberation Sans', sans-serif;color:#585858;transform:scaleX(0.9534);transform-origin:left;">SIM</div>
<div class="t" style="left:766.70px;top:522.00px;font:normal 400 5.9px/5.9px 'Liberation Sans', sans-serif;color:#585858;transform:scaleX(0.9388);transform-origin:left;">Implementação e Desenvolvimento do Projeto</div>
<div class="t" style="left:766.70px;top:531.00px;font:normal 400 5.9px/5.9px 'Liberation Sans', sans-serif;color:#585858;transform:scaleX(0.9107);transform-origin:left;">Faça Parte - Faça Esporte no estado do Rio de</div>
<div class="t" style="left:766.70px;top:540.00px;font:normal 400 5.9px/5.9px 'Liberation Sans', sans-serif;color:#585858;transform:scaleX(0.9243);transform-origin:left;">Janeiro.</div>
<div class="t" style="left:891.00px;top:522.00px;font:normal 400 5.9px/5.9px 'Liberation Sans', sans-serif;color:#585858;transform:scaleX(0.8952);transform-origin:left;">Em execução</div>
<div class="t" style="left:222.50px;top:552.00px;font:normal 400 6.0px/6.0px 'Liberation Mono', monospace;color:#808080;transform:scaleX(0.9258);transform-origin:right;">981182</div>
<div class="t" style="left:250.30px;top:551.00px;font:normal 400 6.2px/6.2px 'Liberation Sans', sans-serif;color:#3d93c4;transform:scaleX(0.8650);transform-origin:left;">Acesso Livre</div>
<div class="t" style="left:297.80px;top:552.00px;font:normal 400 5.9px/5.9px 'Liberation Sans', sans-serif;color:#585858;">RJ</div>
<div class="t" style="left:339.70px;top:552.00px;font:normal 400 5.9px/5.9px 'Liberation Sans', sans-serif;color:#585858;transform:scaleX(0.9152);transform-origin:left;">NITERÓI</div>
<div class="t" style="left:444.80px;top:552.00px;font:normal 400 6.0px/6.0px 'Liberation Mono', monospace;color:#808080;transform:scaleX(0.9304);transform-origin:left;">07960622000171</div>
<div class="t" style="left:498.10px;top:552.00px;font:normal 400 5.9px/5.9px 'Liberation Sans', sans-serif;color:#585858;transform:scaleX(0.8799);transform-origin:left;">INSTITUTO FACA SUA PARTE - FASPAR</div>
<div class="t" style="left:622.80px;top:552.00px;font:normal 400 5.9px/5.9px 'Liberation Sans', sans-serif;color:#585858;transform:scaleX(0.8783);transform-origin:left;">TERMO DE FOMENTO</div>
<div class="t" style="left:724.80px;top:552.00px;font:normal 400 5.9px/5.9px 'Liberation Sans', sans-serif;color:#585858;transform:scaleX(0.9534);transform-origin:left;">SIM</div>
<div class="t" style="left:766.70px;top:552.00px;font:normal 400 5.9px/5.9px 'Liberation Sans', sans-serif;color:#585858;transform:scaleX(0.9139);transform-origin:left;">Apoio à realização ao evento Desafio Nacional</div>
<div class="t" style="left:766.70px;top:560.00px;font:normal 400 5.9px/5.9px 'Liberation Sans', sans-serif;color:#585858;transform:scaleX(0.9093);transform-origin:left;">de Vôlei de Praia no Estado Rio de Janeiro</div>
<div class="t" style="left:891.00px;top:552.00px;font:normal 400 5.9px/5.9px 'Liberation Sans', sans-serif;color:#585858;transform:scaleX(0.8952);transform-origin:left;">Em execução</div>
<div class="t" style="left:222.50px;top:572.00px;font:normal 400 6.0px/6.0px 'Liberation Mono', monospace;color:#808080;transform:scaleX(0.9258);transform-origin:right;">986704</div>
<div class="t" style="left:250.30px;top:571.00px;font:normal 400 6.2px/6.2px 'Liberation Sans', sans-serif;color:#3d93c4;transform:scaleX(0.8650);transform-origin:left;">Acesso Livre</div>
<div class="t" style="left:297.80px;top:572.00px;font:normal 400 5.9px/5.9px 'Liberation Sans', sans-serif;color:#585858;">RJ</div>
<div class="t" style="left:339.70px;top:572.00px;font:normal 400 5.9px/5.9px 'Liberation Sans', sans-serif;color:#585858;transform:scaleX(0.9152);transform-origin:left;">NITERÓI</div>
<div class="t" style="left:444.80px;top:572.00px;font:normal 400 6.0px/6.0px 'Liberation Mono', monospace;color:#808080;transform:scaleX(0.9304);transform-origin:left;">07960622000171</div>
<div class="t" style="left:498.10px;top:572.00px;font:normal 400 5.9px/5.9px 'Liberation Sans', sans-serif;color:#585858;transform:scaleX(0.8799);transform-origin:left;">INSTITUTO FACA SUA PARTE - FASPAR</div>
<div class="t" style="left:622.80px;top:572.00px;font:normal 400 5.9px/5.9px 'Liberation Sans', sans-serif;color:#585858;transform:scaleX(0.8783);transform-origin:left;">TERMO DE FOMENTO</div>
<div class="t" style="left:724.80px;top:572.00px;font:normal 400 5.9px/5.9px 'Liberation Sans', sans-serif;color:#585858;transform:scaleX(0.9534);transform-origin:left;">SIM</div>
<div class="t" style="left:766.70px;top:572.00px;font:normal 400 5.9px/5.9px 'Liberation Sans', sans-serif;color:#585858;transform:scaleX(0.9114);transform-origin:left;">1ª Edição do Evento Turístico " Esporte é Show "</div>
<div class="t" style="left:766.70px;top:581.00px;font:normal 400 5.9px/5.9px 'Liberation Sans', sans-serif;color:#585858;transform:scaleX(0.9226);transform-origin:left;">no estado do Rio de Janeiro.</div>
<div class="t" style="left:891.00px;top:572.00px;font:normal 400 5.9px/5.9px 'Liberation Sans', sans-serif;color:#585858;transform:scaleX(0.8952);transform-origin:left;">Em execução</div>
<div class="t" style="left:222.50px;top:593.00px;font:normal 400 6.0px/6.0px 'Liberation Mono', monospace;color:#808080;transform:scaleX(0.9258);transform-origin:right;">991004</div>
<div class="t" style="left:250.30px;top:592.00px;font:normal 400 6.2px/6.2px 'Liberation Sans', sans-serif;color:#3d93c4;transform:scaleX(0.8650);transform-origin:left;">Acesso Livre</div>
<div class="t" style="left:297.80px;top:593.00px;font:normal 400 5.9px/5.9px 'Liberation Sans', sans-serif;color:#585858;">RJ</div>
<div class="t" style="left:339.70px;top:593.00px;font:normal 400 5.9px/5.9px 'Liberation Sans', sans-serif;color:#585858;transform:scaleX(0.9152);transform-origin:left;">NITERÓI</div>
<div class="t" style="left:444.80px;top:593.00px;font:normal 400 6.0px/6.0px 'Liberation Mono', monospace;color:#808080;transform:scaleX(0.9304);transform-origin:left;">07960622000171</div>
<div class="t" style="left:498.10px;top:593.00px;font:normal 400 5.9px/5.9px 'Liberation Sans', sans-serif;color:#585858;transform:scaleX(0.8799);transform-origin:left;">INSTITUTO FACA SUA PARTE - FASPAR</div>
<div class="t" style="left:622.80px;top:593.00px;font:normal 400 5.9px/5.9px 'Liberation Sans', sans-serif;color:#585858;transform:scaleX(0.8783);transform-origin:left;">TERMO DE FOMENTO</div>
<div class="t" style="left:724.80px;top:593.00px;font:normal 400 5.9px/5.9px 'Liberation Sans', sans-serif;color:#585858;transform:scaleX(0.9534);transform-origin:left;">SIM</div>
<div class="t" style="left:766.70px;top:593.00px;font:normal 400 5.9px/5.9px 'Liberation Sans', sans-serif;color:#585858;transform:scaleX(0.9186);transform-origin:left;">Apoio à realização do evento Circuito Carioca de</div>
<div class="t" style="left:766.70px;top:601.00px;font:normal 400 5.9px/5.9px 'Liberation Sans', sans-serif;color:#585858;transform:scaleX(0.9099);transform-origin:left;">Vôlei de Praia no Estado Rio de Janeiro</div>
<div class="t" style="left:891.00px;top:593.00px;font:normal 400 5.9px/5.9px 'Liberation Sans', sans-serif;color:#585858;transform:scaleX(0.8952);transform-origin:left;">Em execução</div>
<div class="t" style="left:189.10px;top:614.00px;font:normal 700 5.8px/5.8px 'Liberation Sans', sans-serif;color:#505050;transform:scaleX(0.9189);transform-origin:left;">Totais</div>
</body></html>
